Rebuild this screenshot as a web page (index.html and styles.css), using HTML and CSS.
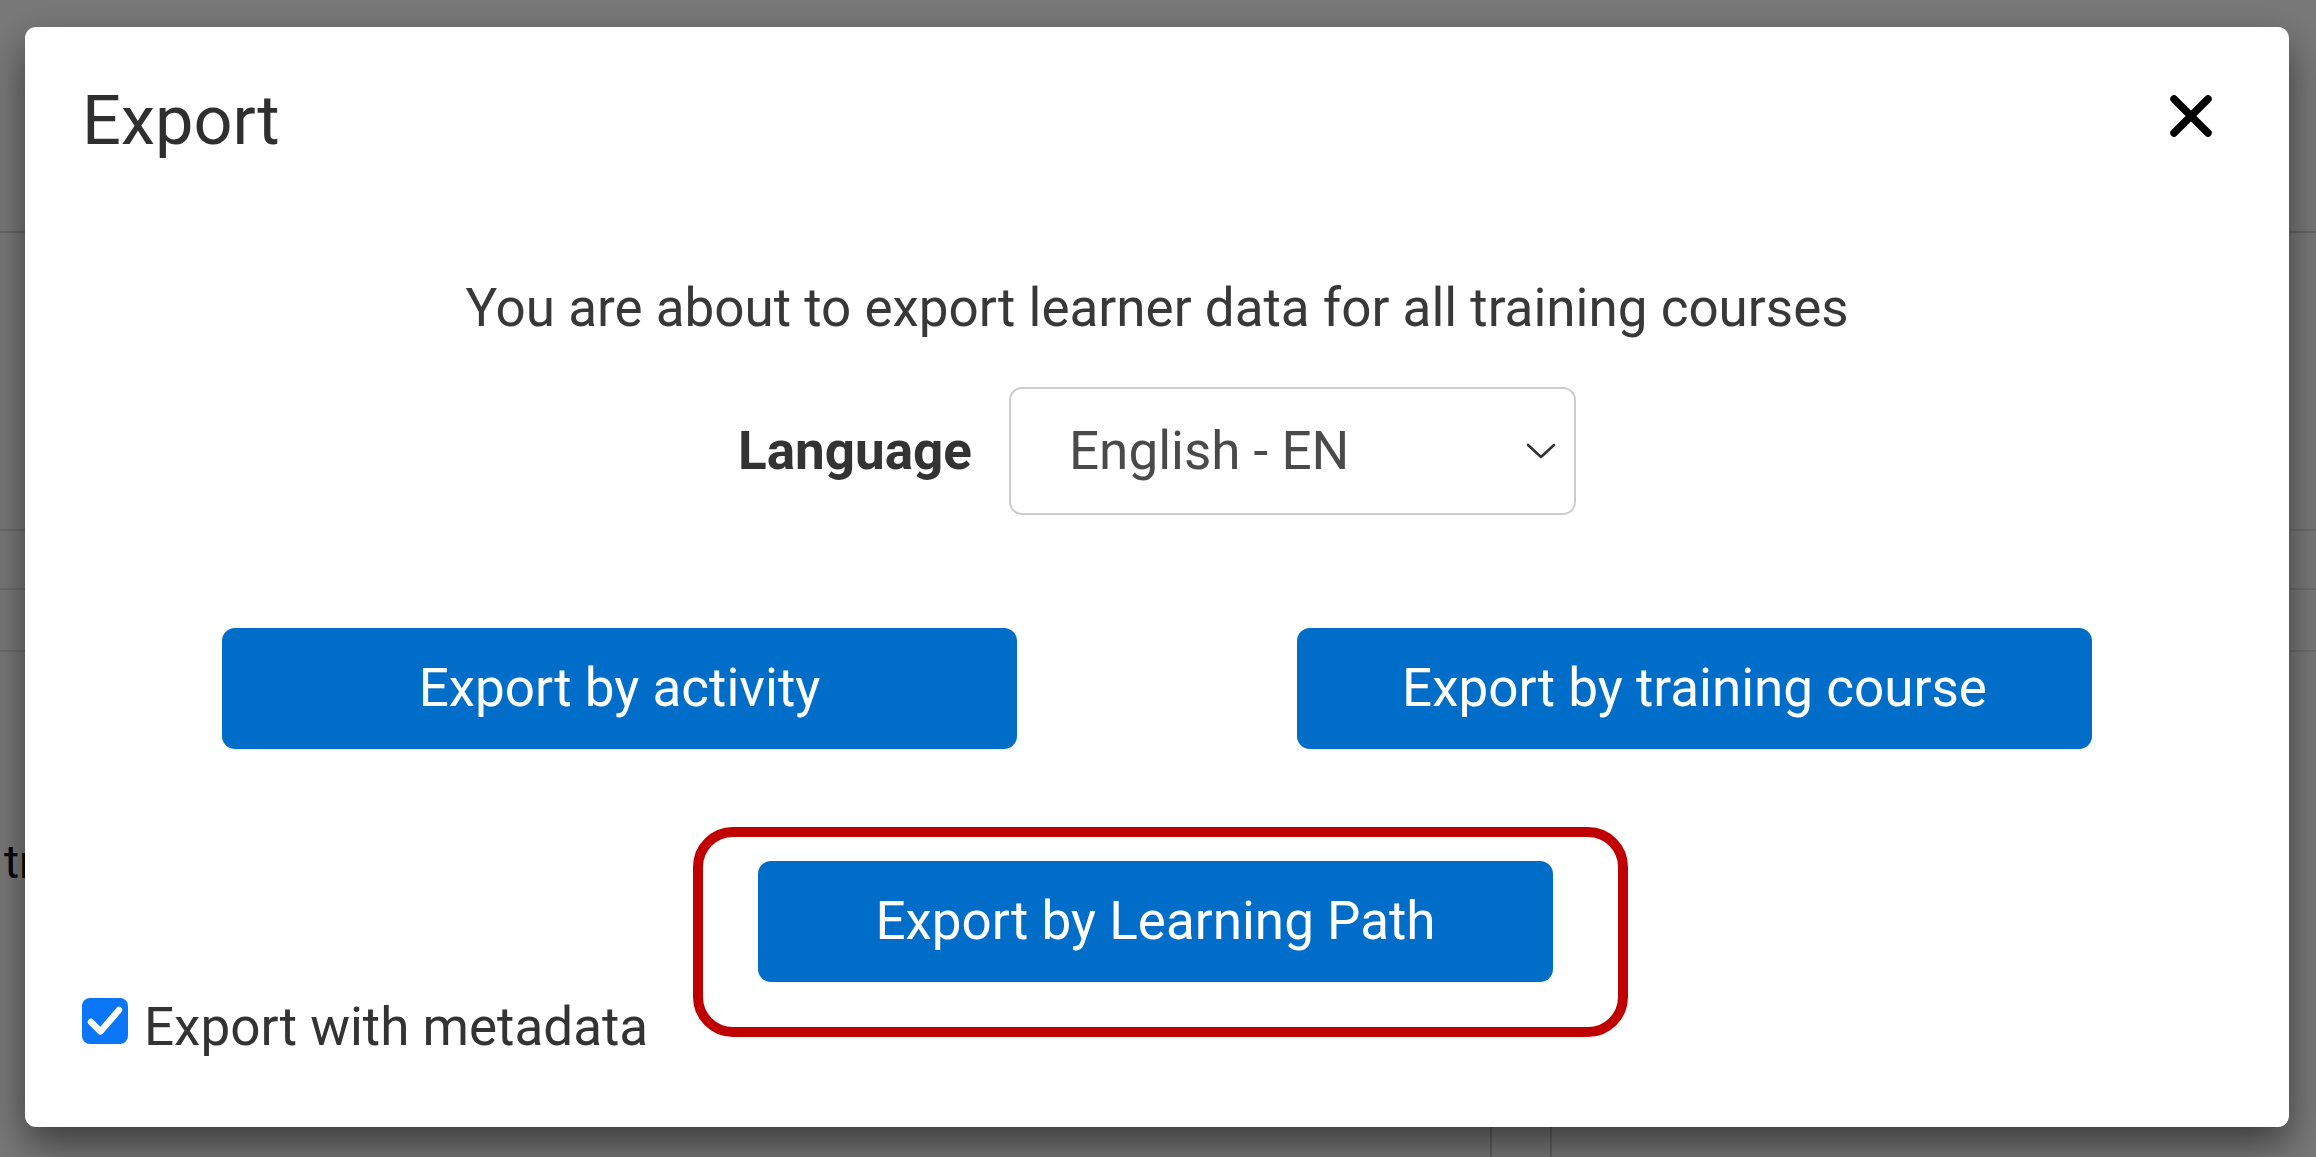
FILE: index.html
```html
<!DOCTYPE html>
<html lang="en">
<head>
<meta charset="utf-8">
<title>Export</title>
<link rel="stylesheet" href="styles.css">
</head>
<body>
<div class="page">
  <div class="pg-head"></div>
  <div class="pg-section"></div>
  <div class="pg-row pg-row-a"></div>
  <div class="pg-row pg-row-b"></div>
  <div class="pg-text">training</div>
  <div class="pg-table">
    <div class="pg-col pg-col-a"></div>
    <div class="pg-col pg-col-b"></div>
    <div class="pg-col pg-col-c"></div>
  </div>
</div>
<div class="backdrop"></div>
<div class="modal" role="dialog" aria-label="Export">
  <div class="modal-header">
    <h5 class="modal-title">Export</h5>
    <svg class="close" viewBox="0 0 44 44" aria-label="Close">
      <path d="M5 5 L39 39 M39 5 L5 39" stroke="#000" stroke-width="7.5" stroke-linecap="round" fill="none"/>
    </svg>
  </div>
  <div class="modal-body">
    <p class="desc">You are about to export learner data for all training courses</p>
    <div class="lang-row">
      <span class="lang-label">Language</span>
      <div class="select">
        <span class="select-text">English - EN</span>
        <svg class="chevron" viewBox="0 0 30 16">
          <path d="M2 2 L15 14 L28 2" stroke="#333" stroke-width="2.6" fill="none" stroke-linecap="round" stroke-linejoin="round"/>
        </svg>
      </div>
    </div>
    <div class="btn-row">
      <button class="btn">Export by activity</button>
      <button class="btn">Export by training course</button>
    </div>
    <div class="btn-single">
      <div class="hl-wrap">
        <button class="btn">Export by Learning Path</button>
        <div class="highlight"></div>
      </div>
    </div>
    <label class="check-row">
      <span class="checkbox">
        <svg viewBox="0 0 46 46"><path d="M9 24 L18.5 33.5 L37 12" stroke="#fff" stroke-width="6.5" fill="none" stroke-linecap="round" stroke-linejoin="round"/></svg>
      </span>
      <span class="check-label">Export with metadata</span>
    </label>
  </div>
</div>
</body>
</html>
```

FILE: styles.css
```css
html, body {
  margin: 0;
  padding: 0;
}
body {
  width: 2316px;
  height: 1157px;
  overflow: hidden;
  font-family: Roboto, "Liberation Sans", Arial, sans-serif;
}

/* underlying page */
.page {
  height: 1157px;
  background: #fff;
  display: flex;
  flex-direction: column;
}
.pg-head {
  height: 231px;
  border-bottom: 2px solid #d6d6d6;
  flex: none;
}
.pg-section {
  height: 296px;
  border-bottom: 2px solid #e2e2e2;
  flex: none;
}
.pg-row {
  flex: none;
  border-bottom: 2px solid #e2e2e2;
}
.pg-row-a { height: 57px; }
.pg-row-b { height: 60px; }
.pg-text {
  flex: none;
  margin-top: 180px;
  padding-left: 4px;
  font-size: 46px;
  line-height: 60px;
  color: #111;
}
.pg-table {
  flex: 1;
  display: flex;
  margin-top: 30px;
}
.pg-col-a { width: 1490px; }
.pg-col-b { width: 58px; border-left: 2px solid #cfcfcf; border-right: 2px solid #cfcfcf; }
.pg-col-c { flex: 1; }

.backdrop {
  position: fixed;
  inset: 0;
  background: rgba(0, 0, 0, 0.53);
}

/* modal */
.modal {
  position: fixed;
  left: 25px;
  top: 27px;
  width: 2264px;
  height: 1100px;
  box-sizing: border-box;
  background: #fff;
  border-radius: 11px;
  box-shadow: 0 18px 40px rgba(0, 0, 0, 0.5);
  display: flex;
  flex-direction: column;
  color: #333;
}
.modal-header {
  display: flex;
  justify-content: space-between;
  align-items: flex-start;
  padding: 54px 76px 0 57px;
}
.modal-title {
  margin: 0;
  font-size: 68.5px;
  line-height: 80.4px;
  font-weight: 400;
  color: #2f2f2f;
}
.close {
  width: 44px;
  height: 44px;
  margin-top: 13px;
}
.modal-body {
  display: flex;
  flex-direction: column;
  padding: 0 57px;
  font-size: 53px;
  line-height: 80.4px;
}
.desc {
  margin: 107px 0 0;
  text-align: center;
  color: #383838;
}
.lang-row {
  margin-top: 38px;
  display: flex;
  justify-content: center;
  align-items: center;
  gap: 37px;
}
.lang-label {
  font-weight: 700;
  color: #333;
}
.select {
  width: 567px;
  height: 128px;
  box-sizing: border-box;
  border: 2px solid #cdcdcd;
  border-radius: 13px;
  display: flex;
  align-items: center;
  justify-content: space-between;
  padding: 0 18px 0 58px;
  color: #4a4a4a;
}
.chevron {
  width: 30px;
  height: 16px;
}
.btn-row {
  margin-top: 113px;
  display: grid;
  grid-template-columns: 1fr 1fr;
  justify-items: center;
}
.btn {
  width: 795px;
  height: 121px;
  border: none;
  border-radius: 13px;
  background: #006ec8;
  color: #fff;
  font-family: Roboto, "Liberation Sans", Arial, sans-serif;
  font-size: 53px;
  line-height: 80.4px;
  font-weight: 400;
  padding: 0;
  display: flex;
  align-items: center;
  justify-content: center;
}
.btn-single {
  margin-top: 112px;
  display: flex;
  justify-content: center;
  padding-right: 3px;
}
.hl-wrap {
  position: relative;
}
.highlight {
  position: absolute;
  left: -65px;
  top: -34px;
  right: -75px;
  bottom: -55px;
  border: 10px solid #c00000;
  border-radius: 40px;
  pointer-events: none;
}
.check-row {
  margin-top: 5.5px;
  display: flex;
  align-items: flex-start;
  gap: 16px;
}
.checkbox {
  width: 46px;
  height: 46px;
  margin-top: 10.5px;
  border-radius: 8px;
  background: #0a75f5;
  display: block;
  flex: none;
}
.checkbox svg {
  display: block;
  width: 46px;
  height: 46px;
}
.check-label {
  color: #333;
}
```
